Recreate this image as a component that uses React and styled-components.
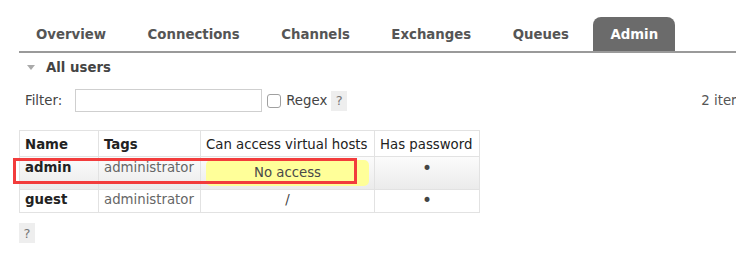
import React from "react";
import styled, { createGlobalStyle } from "styled-components";

const GlobalStyle = createGlobalStyle`
  html, body { margin: 0; padding: 0; background: #fff; overflow: hidden; }
  body {
    font-family: "DejaVu Sans", Verdana, sans-serif;
    font-size: 13.3px;
    color: #484848;
  }
`;

const Page = styled.div`
  width: 732px;
  padding: 17px 0 0 19px;
`;

const Tabs = styled.ul`
  display: flex;
  gap: 7.5px;
  list-style: none;
  margin: 0;
  padding: 0;
  height: 34px;
  border-bottom: 2px solid #9a9a9a;
  width: 760px;
`;

const Tab = styled.li`
  height: 34px;
  line-height: 35px;
  padding: 0 17px 0 17px;
  font-weight: bold;
  color: ${(p) => (p.$active ? "#fff" : "#555")};
  background: ${(p) => (p.$active ? "#6b6b6b" : "transparent")};
  border-radius: 8px 8px 0 0;
`;

const Heading = styled.h2`
  display: flex;
  align-items: center;
  gap: 11px;
  margin: 4px 0 0 0;
  padding-left: 8px;
  height: 20px;
  font-size: 13.3px;
  font-weight: bold;
  color: #444;
`;

const Triangle = styled.span`
  width: 0;
  height: 0;
  border-left: 4.5px solid transparent;
  border-right: 4.5px solid transparent;
  border-top: 5px solid #aaa;
`;

const FilterRow = styled.div`
  display: flex;
  align-items: center;
  height: 23px;
  margin-top: 12px;
  padding-left: 6px;
  color: #444;
`;

const FilterLabel = styled.label`
  margin-right: 13px;
`;

const FilterInput = styled.input`
  box-sizing: border-box;
  width: 187px;
  height: 23px;
  border: 1px solid #cfcfcf;
  margin: 0;
  padding: 0 4px;
  font: inherit;
`;

const Check = styled.input`
  appearance: none;
  box-sizing: border-box;
  width: 14px;
  height: 14px;
  margin: 0 5px 0 5px;
  border: 1px solid #a0a0a0;
  border-radius: 3px;
  background: #fff;
`;

const Help = styled.span`
  display: inline-flex;
  align-items: center;
  justify-content: center;
  width: 16px;
  height: 20px;
  background: #eeeeee;
  color: #777;
  font-size: 13px;
  margin-left: ${(p) => p.$ml || 0}px;
`;

const Count = styled.span`
  margin-left: auto;
  color: #555;
`;

const TableWrap = styled.div`
  position: relative;
  margin-top: 18px;
  width: 460px;
`;

const Table = styled.table`
  border-collapse: collapse;
  width: 461px;
  table-layout: fixed;
  border: 1px solid #e2e2e2;
`;

const Th = styled.th`
  text-align: left;
  padding: 6px 5px 3px;
  line-height: 16px;
  font-weight: ${(p) => (p.$bold ? "bold" : "normal")};
  color: #222;
  border: 1px solid #e2e2e2;
  white-space: nowrap;
`;

const Tr = styled.tr`
  background: ${(p) =>
    p.$hover ? "linear-gradient(#fbfbfb, #ebebeb)" : "#fff"};
`;

const Td = styled.td`
  vertical-align: top;
  padding: ${(p) => (p.$tall ? "3px 5px" : "2px 5px")};
  line-height: 16px;
  border: 1px solid #e2e2e2;
  white-space: nowrap;
  text-align: ${(p) => (p.$center ? "center" : "left")};
  font-weight: ${(p) => (p.$bold ? "bold" : "normal")};
  color: ${(p) => p.$color || "#444"};
`;

const NoAccess = styled.div`
  background: #ffff99;
  border-radius: 5px;
  padding: 5px 0;
  text-align: center;
  color: #4a4a4a;
`;

const Bullet = styled.span`
  color: #444;
  font-size: 17px;
  line-height: 16px;
`;

const Annotation = styled.div`
  position: absolute;
  left: -6px;
  top: 28px;
  width: 344px;
  height: 26px;
  box-sizing: border-box;
  border: 3px solid #f23c3c;
  pointer-events: none;
`;

const BottomHelp = styled(Help)`
  display: flex;
  margin-top: 10px;
  height: 20px;
`;

const tabs = ["Overview", "Connections", "Channels", "Exchanges", "Queues", "Admin"];

const users = [
  { name: "admin", tags: "administrator", vhosts: null, hover: true },
  { name: "guest", tags: "administrator", vhosts: "/", hover: false },
];

export default function App() {
  return (
    <>
      <GlobalStyle />
      <Page>
        <Tabs>
          {tabs.map((t) => (
            <Tab key={t} $active={t === "Admin"}>
              {t}
            </Tab>
          ))}
        </Tabs>
        <Heading>
          <Triangle />
          All users
        </Heading>
        <FilterRow>
          <FilterLabel>Filter:</FilterLabel>
          <FilterInput type="text" />
          <Check type="checkbox" />
          <span>Regex</span>
          <Help $ml={4}>?</Help>
          <Count>2 items</Count>
        </FilterRow>
        <TableWrap>
          <Table>
            <colgroup>
              <col style={{ width: 79 }} />
              <col style={{ width: 102 }} />
              <col style={{ width: 174 }} />
              <col style={{ width: 105 }} />
            </colgroup>
            <thead>
              <tr>
                <Th $bold>Name</Th>
                <Th $bold>Tags</Th>
                <Th>Can access virtual hosts</Th>
                <Th>Has password</Th>
              </tr>
            </thead>
            <tbody>
              {users.map((u) => (
                <Tr key={u.name} $hover={u.hover}>
                  <Td $tall={u.hover} $bold $color="#222">
                    {u.name}
                  </Td>
                  <Td $tall={u.hover} $color="#666">
                    {u.tags}
                  </Td>
                  <Td $tall={u.hover} $center>
                    {u.vhosts === null ? <NoAccess>No access</NoAccess> : u.vhosts}
                  </Td>
                  <Td $tall={u.hover} $center>
                    <Bullet>•</Bullet>
                  </Td>
                </Tr>
              ))}
            </tbody>
          </Table>
          <Annotation />
        </TableWrap>
        <BottomHelp>?</BottomHelp>
      </Page>
    </>
  );
}
